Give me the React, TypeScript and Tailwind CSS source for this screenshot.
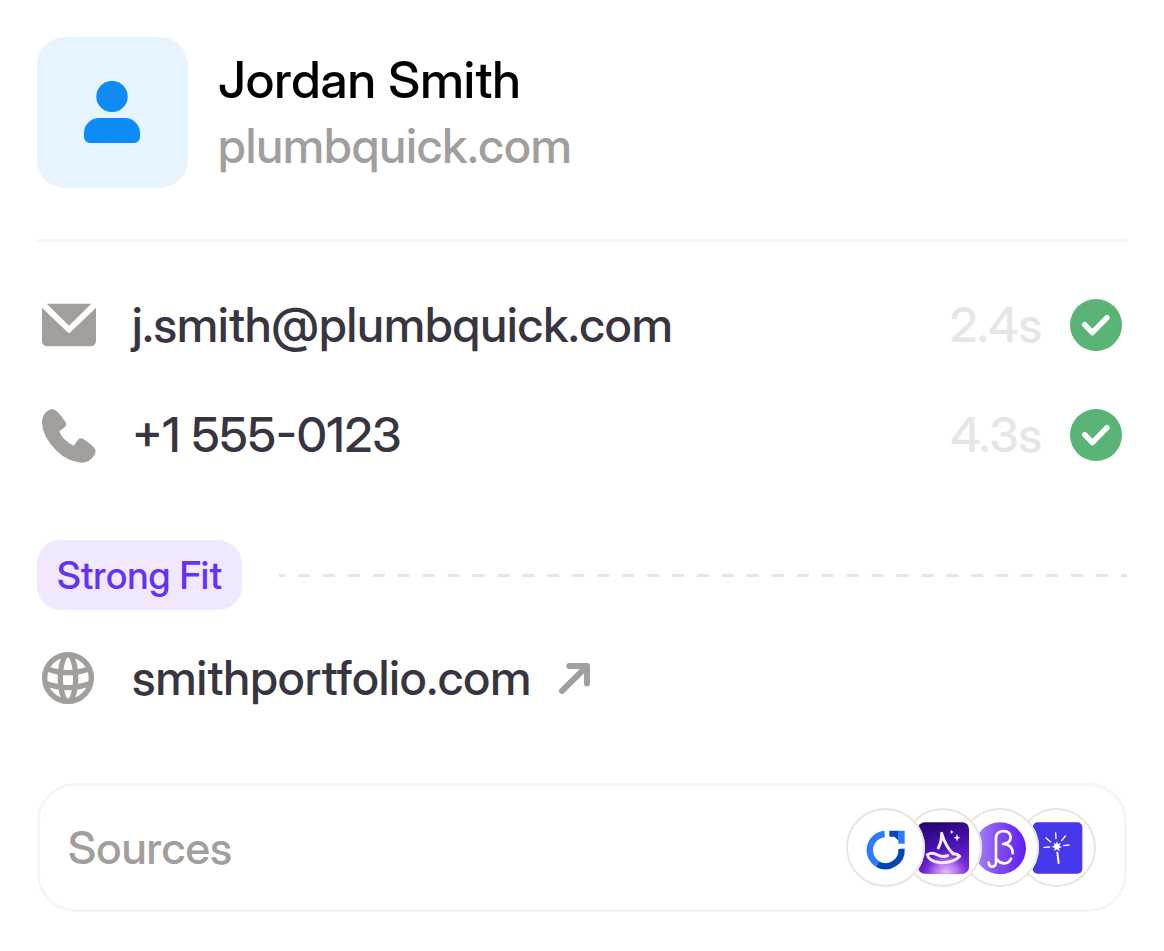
import type { ReactNode } from "react";

function UserIcon() {
  return (
    <svg viewBox="0 0 58 64" className="h-[64px] w-[58px]" fill="#0d8bf7" aria-hidden="true">
      <circle cx="28" cy="15.500" r="15.7" />
      <path d="M15 37H41A15 15 0 0 1 56 52V55.500Q56 62 49.500 62H6.500Q0 62 0 55.500V52A15 15 0 0 1 15 37Z" />
    </svg>
  );
}

function MailIcon() {
  return (
    <svg viewBox="0 0 160 156" className="size-[54px]" fill="#a29e9b" aria-hidden="true">
      <path d="M14 15H146L80 80Z" />
      <path d="M0 27L75 99Q80 104 85 99L160 27V124Q160 141 143 141H17Q0 141 0 124Z" />
    </svg>
  );
}

function PhoneIcon() {
  return (
    <svg viewBox="66 387 160 160" className="size-[54px] overflow-visible" fill="#a29e9b" aria-hidden="true">
      <path d="M85 394Q98 386 109 396Q124 410 136 429Q141 437 133 444L117 456Q127 483 160 499L173 481Q179 474 188 479Q206 489 219 503Q228 511 223 523Q209 549 181 549Q142 546 109 514Q67 471 66 431Q66 405 85 394Z" />
    </svg>
  );
}

function GlobeIcon() {
  return (
    <svg viewBox="0 0 156 156" className="size-[52px]" fill="none" stroke="#a29e9b" strokeWidth="16" aria-hidden="true">
      <circle cx="78" cy="78" r="70" />
      <ellipse cx="78" cy="78" rx="23" ry="70" />
      <path d="M14 50Q78 74 142 50M10 94Q78 120 146 94" />
    </svg>
  );
}

function CheckIcon() {
  return (
    <svg viewBox="0 0 156 156" className="size-[52px]" role="img" aria-label="Verified">
      <circle cx="78" cy="78" r="78" fill="#5ab476" />
      <path d="M44 77L67 101L111 56" fill="none" stroke="#fff" strokeWidth="16" strokeLinecap="round" strokeLinejoin="round" />
    </svg>
  );
}

function ArrowIcon() {
  return (
    <svg viewBox="0 0 92 92" className="size-[31px]" fill="none" stroke="#a29e9b" strokeWidth="18" strokeLinecap="round" strokeLinejoin="round" aria-hidden="true">
      <path d="M9 83L83 9M31 9H83V61" />
    </svg>
  );
}

function RingLogo() {
  return (
    <svg viewBox="0 0 237 237" className="size-full" aria-hidden="true">
      <path d="M116 78A48.500 48.500 0 0 0 95 168" fill="none" stroke="#2b7bff" strokeWidth="19" />
      <path d="M94.500 168.500A48.500 48.500 0 0 0 166.500 122" fill="none" stroke="#0645b8" strokeWidth="19" />
      <path d="M130 68H158V98L145 86H130Z" fill="#0645b8" />
      <path d="M157 68H176V107H157Z" fill="#2b7bff" />
    </svg>
  );
}

function HatLogo() {
  return (
    <svg viewBox="0 0 237 237" className="size-full" aria-hidden="true">
      <defs>
        <linearGradient id="hat-sky" x1="0.300" y1="0" x2="0.600" y2="1">
          <stop offset="0" stopColor="#24066f" />
          <stop offset="0.500" stopColor="#4a12b4" />
          <stop offset="1" stopColor="#7a2bd8" />
        </linearGradient>
        <radialGradient id="hat-glow" cx="0.550" cy="1" r="0.480">
          <stop offset="0" stopColor="#ecc6f8" />
          <stop offset="0.500" stopColor="#c07bee" stopOpacity="0.800" />
          <stop offset="1" stopColor="#8a3be0" stopOpacity="0" />
        </radialGradient>
      </defs>
      <rect x="45" y="43" width="153" height="154" rx="20" fill="url(#hat-sky)" />
      <rect x="45" y="43" width="153" height="154" rx="20" fill="url(#hat-glow)" />
      <g fill="none" stroke="#f3edff" strokeLinecap="round" strokeLinejoin="round">
        <path d="M106 120Q116 102 116 76Q127 114 150 137" strokeWidth="9" />
        <path d="M134 143Q119 149 104 141Q88 131 73 140Q76 159 112 164Q153 165 170 145Q163 137 150 137" strokeWidth="9" />
      </g>
      <path d="M162 77L165 86L172 89L165 92L162 101L159 92L152 89L159 86ZM146 66L148 70L152 72L148 74L146 78L144 74L140 72L144 70Z" fill="#f3edff" />
    </svg>
  );
}

function BetaLogo() {
  return (
    <svg viewBox="0 0 237 237" className="size-full" aria-hidden="true">
      <defs>
        <linearGradient id="beta-fill">
          <stop offset="0" stopColor="#a98af4" />
          <stop offset="0.500" stopColor="#8049f3" />
          <stop offset="1" stopColor="#621df2" />
        </linearGradient>
      </defs>
      <circle cx="120" cy="121" r="78" fill="url(#beta-fill)" />
      <path d="M86 164Q87 176 97 176Q108 175 108 162V90Q109 70 130 69Q151 70 152 88Q151 106 129 108Q158 109 158 136M111 155Q121 167 135 166Q148 164 153 152" fill="none" stroke="#fff" strokeWidth="8" strokeLinecap="round" strokeLinejoin="round" />
    </svg>
  );
}

function WandLogo() {
  return (
    <svg viewBox="0 0 237 237" className="size-full" aria-hidden="true">
      <rect x="47" y="43" width="149" height="154" rx="15" fill="#4538eb" />
      <g fill="none" stroke="#fff" strokeWidth="4" strokeLinecap="round">
        <path d="M116 75L117 92M145 84L134 98M156 111L140 113M81 118L98 117M87 90L101 102" />
        <path d="M121 134L125 165" strokeWidth="6" />
      </g>
      <path d="M120 99L123 108L132 105L127 113L135 118L126 120L128 130L120 124L112 129L113 120L104 116L113 112L109 104L117 108Z" fill="#fff" />
    </svg>
  );
}

function ContactRow({ icon, time, children }: { icon: ReactNode; time: string; children: ReactNode }) {
  return (
    <li className="flex h-[54px] items-center px-[5px]">
      <span className="mr-9 flex w-[54px] shrink-0">{icon}</span>
      <span className="grow">{children}</span>
      <span className="mr-7 text-[#e7e6e5]">{time}</span>
      <CheckIcon />
    </li>
  );
}

const sources = [
  { name: "ring", logo: <RingLogo />, layer: "z-40" },
  { name: "hat", logo: <HatLogo />, layer: "z-30" },
  { name: "beta", logo: <BetaLogo />, layer: "z-20" },
  { name: "wand", logo: <WandLogo />, layer: "z-10" },
];

export default function App() {
  return (
    <main className="min-h-screen bg-white px-[37px] py-[37px] font-['Inter_Display','Inter',sans-serif] text-[48px] leading-[54px] font-medium text-[#383440]">
      <header className="flex items-center gap-[30px] border-b-3 border-[#f5f5f5] pb-[51px]">
        <div className="flex size-[151px] shrink-0 items-center justify-center rounded-[28px] bg-[#e5f4fe]">
          <UserIcon />
        </div>
        <div>
          <h1 className="text-[51px] leading-[66px] text-black">Jordan Smith</h1>
          <p className="leading-[66px] text-[#a29e9b]">plumbquick.com</p>
        </div>
      </header>

      <ul className="mt-[56px] flex flex-col gap-[56px]">
        <ContactRow icon={<MailIcon />} time="2.4s">
          <a href="mailto:j.smith@plumbquick.com">j.smith@plumbquick.com</a>
        </ContactRow>
        <ContactRow icon={<PhoneIcon />} time="4.3s">
          <a href="tel:+15550123">+1 555-0123</a>
        </ContactRow>
      </ul>

      <div className="mt-[78px] flex items-center gap-[37px]">
        <span className="flex h-[70px] items-center rounded-[24px] bg-[#f1e8fe] px-5 text-[38px] whitespace-nowrap text-[#6431fb]">Strong Fit</span>
        <span className="h-[3px] grow bg-[linear-gradient(to_right,#e7e6e5_25%,transparent_25%,transparent_75%,#e7e6e5_75%)] bg-size-[25px_3px] [background-repeat:round]" />
      </div>

      <div className="mt-[41px] flex h-[54px] items-center px-[5px]">
        <span className="mr-9 flex w-[54px] shrink-0">
          <GlobeIcon />
        </span>
        <a href="https://smithportfolio.com" className="flex items-center gap-7">
          smithportfolio.com
          <ArrowIcon />
        </a>
      </div>

      <section className="mt-[78px] flex h-[129px] items-center justify-between rounded-[38px] border-3 border-[#f5f5f4] px-7">
        <h2 className="text-[45px] text-[#a29e9b]">Sources</h2>
        <ul className="isolate flex">
          {sources.map((source, index) => (
            <li
              key={source.name}
              className={`relative size-[79px] overflow-hidden rounded-full bg-white outline-2 -outline-offset-2 outline-[#e7e6e5] ${source.layer} ${index > 0 ? "-ml-[22px]" : ""}`}
            >
              {source.logo}
            </li>
          ))}
        </ul>
      </section>
    </main>
  );
}
